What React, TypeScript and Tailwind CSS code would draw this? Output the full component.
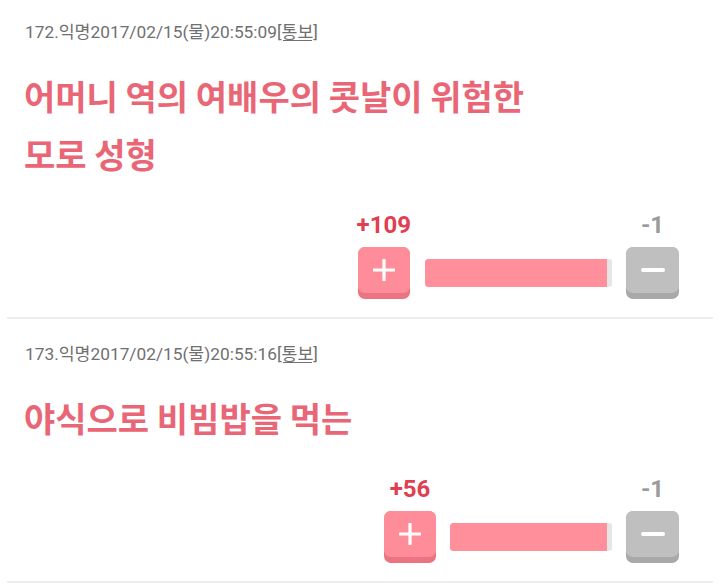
const posts = [
  {
    no: 172,
    time: "2017/02/15(물)20:55:09",
    title: ["어머니 역의 여배우의 콧날이 위험한", "모로 성형"],
    up: 109,
    down: 1,
    barWidth: "w-[187px]",
    first: true,
  },
  {
    no: 173,
    time: "2017/02/15(물)20:55:16",
    title: ["야식으로 비빔밥을 먹는"],
    up: 56,
    down: 1,
    barWidth: "w-[162px]",
    first: false,
  },
];

type Post = (typeof posts)[number];

export default function App() {
  return (
    <div className="min-h-screen w-full bg-white font-['Roboto','Noto_Sans_CJK_KR',sans-serif]">
      {posts.map((post) => (
        <PostItem key={post.no} post={post} />
      ))}
    </div>
  );
}

const PostItem = ({ post }: { post: Post }) => {
  const ratio = post.up / (post.up + post.down);
  return (
    <div className={`${post.first ? "pt-[22px]" : "pt-[25px]"}`}>
      <div className="px-[25px] text-[17.3px] leading-[20px] text-[#707070]">
        {post.no}.익명{post.time}
        <span className="underline underline-offset-2">[통보]</span>
      </div>

      <h2 className="mt-[25px] px-[24px] font-['Noto_Sans_CJK_KR',sans-serif] text-[34px] font-bold leading-[58px] text-[#e96676]">
        {post.title.map((line) => (
          <div key={line}>{line}</div>
        ))}
      </h2>

      <div className="mt-[28px] flex justify-end pr-[41px]">
        <div className="grid grid-cols-[auto_auto_auto] items-center gap-x-[14px] gap-y-[8px]">
          <span className="justify-self-center text-[24px] font-bold leading-[28px] text-[#df3f50]">
            +{post.up}
          </span>
          <span />
          <span className="justify-self-center text-[24px] font-bold leading-[28px] text-[#9b9b9b]">
            -{post.down}
          </span>

          <button className="flex h-[52px] w-[52px] items-center justify-center self-start justify-self-center rounded-[7px] bg-[#ec7381] pb-[6px]">
            <span className="flex h-[46px] w-[52px] items-center justify-center rounded-[7px] bg-[#ff8d99]">
              <svg width="22" height="22" viewBox="0 0 22 22">
                <path d="M11 1v20M1 11h20" stroke="white" strokeWidth="3.2" strokeLinecap="round" />
              </svg>
            </span>
          </button>

          <div className={`${post.barWidth} h-[28px] overflow-hidden rounded-[3px] bg-[#e6e6e6]`}>
            <div className="h-full rounded-l-[3px] bg-[#ff8f9b]" style={{ width: `${ratio * 100 - 1.5}%` }} />
          </div>

          <button className="flex h-[52px] w-[53px] items-center justify-center self-start rounded-[7px] bg-[#a9a9a9] pb-[6px]">
            <span className="flex h-[46px] w-[53px] items-center justify-center rounded-[7px] bg-[#bfbfbf]">
              <span className="h-[4px] w-[24px] rounded-full bg-white" />
            </span>
          </button>
        </div>
      </div>

      <div className="mx-[7px] mt-[18px] h-[2px] bg-[#eeeeee]" />
    </div>
  );
};
